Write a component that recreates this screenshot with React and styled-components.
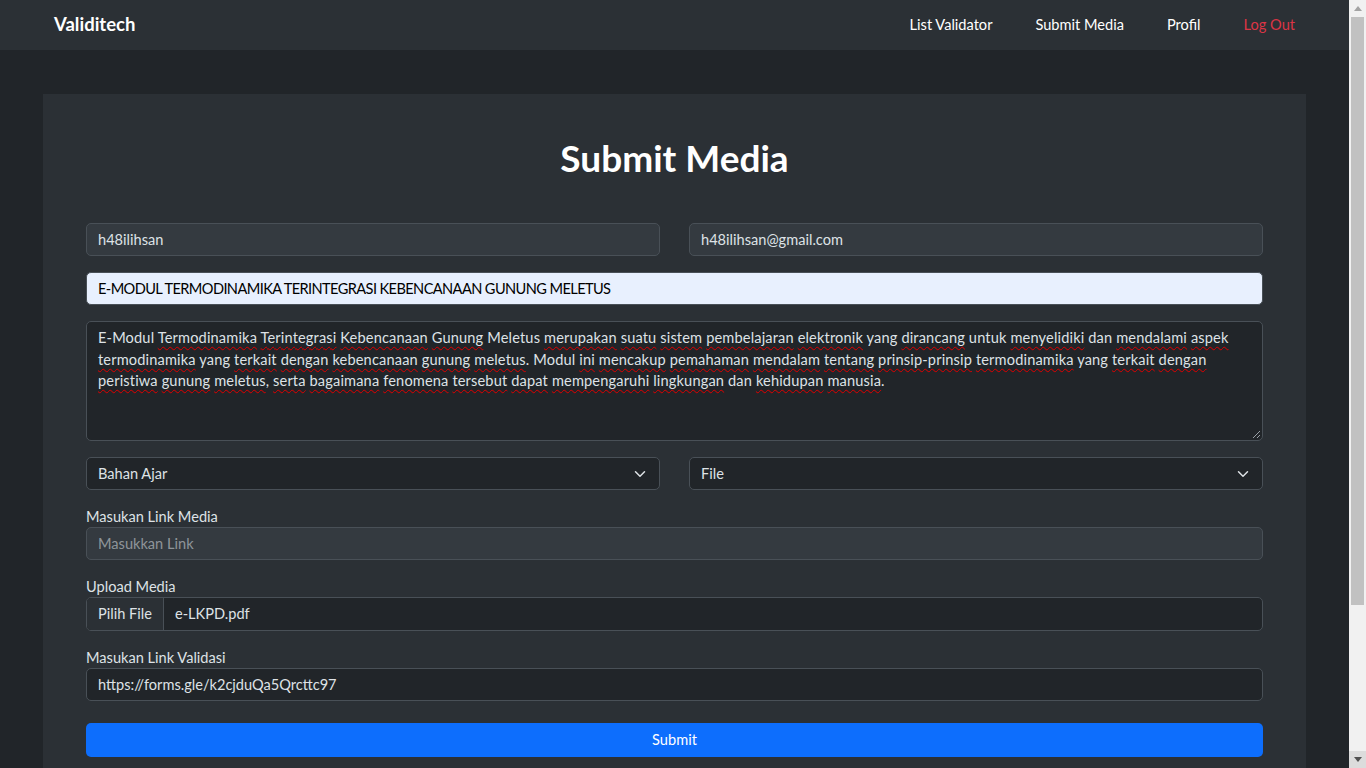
import React from "react";
import styled, { createGlobalStyle } from "styled-components";

const GlobalStyle = createGlobalStyle`
  html, body {
    margin: 0;
    padding: 0;
  }
  body {
    background: #212529;
    color: #dee2e6;
    font-family: Lato, "Open Sans", "Noto Sans", sans-serif;
    font-size: 14.6px;
    line-height: 1.5;
  }
  * {
    box-sizing: border-box;
  }
`;

const Page = styled.div`
  margin-right: 17px;
`;

/* scrollbar bawaan browser di referensi */
const ScrollTrack = styled.div`
  position: fixed;
  top: 0;
  right: 0;
  width: 17px;
  height: 100vh;
  background: #f1f1f1;
  display: flex;
  flex-direction: column;
`;

const ScrollArrow = styled.div`
  height: 17px;
  display: flex;
  align-items: center;
  justify-content: center;
  background: ${props => (props.active ? "#dcdcdc" : "#f1f1f1")};
`;

const ScrollThumb = styled.div`
  margin: 0 2px;
  height: 588px;
  background: #c1c1c1;
`;

const ScrollSpace = styled.div`
  flex: 1;
`;

const Navbar = styled.nav`
  height: 50px;
  background: #2b3035;
  display: flex;
  align-items: center;
  justify-content: space-between;
  padding: 0 54px;
`;

const Brand = styled.a`
  color: #fff;
  font-size: 18.5px;
  font-weight: 700;
  text-decoration: none;
`;

const NavLinks = styled.div`
  display: flex;
  gap: 43px;
`;

const NavLink = styled.a`
  color: ${props => (props.danger ? "#dc3545" : "#fff")};
  font-size: 14.6px;
  text-decoration: none;
`;

const Container = styled.div`
  padding: 44px 43px 0;
`;

const Card = styled.div`
  background: #2b3035;
  padding: 43px 43px 60px;
`;

const Title = styled.h1`
  margin: 0 0 44px;
  text-align: center;
  color: #fff;
  font-size: 37px;
  font-weight: 700;
  line-height: 42px;
`;

const Form = styled.form`
  display: grid;
  gap: 16px;
`;

const Row = styled.div`
  display: grid;
  grid-template-columns: 1fr 1fr;
  gap: 29px;
`;

const Group = styled.div`
  display: flex;
  flex-direction: column;
`;

const Label = styled.label`
  line-height: 21px;
  color: #dee2e6;
`;

const bgFor = variant =>
  variant === "disabled" ? "#343a40" : variant === "autofill" ? "#e8f0fe" : "#212529";

const Input = styled.input`
  height: 33px;
  width: 100%;
  padding: 0 11px;
  border: 1px solid #495057;
  border-radius: 5px;
  background: ${props => bgFor(props.variant)};
  color: ${props => (props.variant === "autofill" ? "#000" : "#dee2e6")};
  font: inherit;
  letter-spacing: ${props => (props.variant === "autofill" ? "-0.6px" : "0")};
  outline: none;

  &::placeholder {
    color: rgba(222, 226, 230, 0.55);
  }
`;

const TextBox = styled.div`
  position: relative;
  height: 120px;
  padding: 5px 11px;
  border: 1px solid #495057;
  border-radius: 5px;
  background: #212529;
  line-height: 21.5px;
  letter-spacing: 0.15px;
  color: #dee2e6;
`;

const Line = styled.div`
  white-space: nowrap;
`;

const Typo = styled.span`
  text-decoration: underline wavy #e00000;
  text-decoration-thickness: 1px;
  text-underline-offset: 3px;
  text-decoration-skip-ink: none;
`;

const Grip = styled.svg`
  position: absolute;
  right: 1px;
  bottom: 1px;
`;

const SelectBox = styled.div`
  height: 33px;
  display: flex;
  align-items: center;
  justify-content: space-between;
  padding: 0 12px 0 11px;
  border: 1px solid #495057;
  border-radius: 5px;
  background: #212529;
  color: #dee2e6;
`;

const FileBox = styled.div`
  height: 34px;
  display: flex;
  border: 1px solid #495057;
  border-radius: 5px;
  background: #212529;
  overflow: hidden;
`;

const FileButton = styled.span`
  display: flex;
  align-items: center;
  padding: 0 11px;
  background: #2b3035;
  border-right: 1px solid #495057;
  color: #dee2e6;
`;

const FileName = styled.span`
  display: flex;
  align-items: center;
  padding: 0 11px;
  color: #dee2e6;
`;

const SubmitButton = styled.button`
  margin-top: 6px;
  height: 34px;
  border: none;
  border-radius: 5px;
  background: #0d6efd;
  color: #fff;
  font: inherit;
  cursor: pointer;
`;

const Chevron = () => (
  <svg width="14" height="12" viewBox="0 0 16 16" fill="none">
    <path
      d="M2 5l6 6 6-6"
      stroke="#dee2e6"
      strokeWidth="2"
      strokeLinecap="round"
      strokeLinejoin="round"
    />
  </svg>
);

const Select = ({ value }) => (
  <SelectBox>
    <span>{value}</span>
    <Chevron />
  </SelectBox>
);

const Triangle = ({ down, color }) => (
  <svg width="8" height="5" viewBox="0 0 8 5">
    <path d={down ? "M0 0h8L4 5z" : "M0 5h8L4 0z"} fill={color} />
  </svg>
);

// kata yang ditandai spellcheck di referensi
const bad = new Set([
  "Termodinamika", "Terintegrasi", "Kebencanaan", "Gunung", "merupakan", "suatu",
  "sistem", "pembelajaran", "elektronik", "dirancang", "menyelidiki", "mendalami",
  "aspek", "termodinamika", "terkait", "dengan", "kebencanaan", "gunung", "meletus",
  "ini", "mencakup", "pemahaman", "mendalam", "tentang", "prinsip-prinsip",
  "peristiwa", "serta", "bagaimana", "fenomena", "tersebut", "dapat", "mempengaruhi",
  "lingkungan", "kehidupan", "manusia"
]);

const lines = [
  "E-Modul Termodinamika Terintegrasi Kebencanaan Gunung Meletus merupakan suatu sistem pembelajaran elektronik yang dirancang untuk menyelidiki dan mendalami aspek",
  "termodinamika yang terkait dengan kebencanaan gunung meletus. Modul ini mencakup pemahaman mendalam tentang prinsip-prinsip termodinamika yang terkait dengan",
  "peristiwa gunung meletus, serta bagaimana fenomena tersebut dapat mempengaruhi lingkungan dan kehidupan manusia."
];

const renderLine = text =>
  text.split(" ").map((word, i) => {
    const clean = word.replace(/[.,]$/, "");
    const tail = word.slice(clean.length);
    return (
      <React.Fragment key={i}>
        {i > 0 && " "}
        {bad.has(clean) ? <Typo>{clean}</Typo> : clean}
        {tail}
      </React.Fragment>
    );
  });

export default function App() {
  return (
    <>
      <GlobalStyle />
      <Page>
        <Navbar>
          <Brand href="#">Validitech</Brand>
          <NavLinks>
            <NavLink href="#">List Validator</NavLink>
            <NavLink href="#">Submit Media</NavLink>
            <NavLink href="#">Profil</NavLink>
            <NavLink href="#" danger>
              Log Out
            </NavLink>
          </NavLinks>
        </Navbar>
        <Container>
          <Card>
            <Title>Submit Media</Title>
            <Form onSubmit={e => e.preventDefault()}>
              <Row>
                <Input variant="disabled" defaultValue="h48ilihsan" readOnly />
                <Input variant="disabled" defaultValue="h48ilihsan@gmail.com" readOnly />
              </Row>
              <Input
                variant="autofill"
                defaultValue="E-MODUL TERMODINAMIKA TERINTEGRASI KEBENCANAAN GUNUNG MELETUS"
              />
              <TextBox>
                {lines.map((l, i) => (
                  <Line key={i}>{renderLine(l)}</Line>
                ))}
                <Grip width="12" height="12" viewBox="0 0 12 12">
                  <path d="M11 4L4 11M11 8L8 11" stroke="#9aa0a6" strokeWidth="1" />
                </Grip>
              </TextBox>
              <Row>
                <Select value="Bahan Ajar" />
                <Select value="File" />
              </Row>
              <Group>
                <Label>Masukan Link Media</Label>
                <Input variant="disabled" placeholder="Masukkan Link" readOnly />
              </Group>
              <Group>
                <Label>Upload Media</Label>
                <FileBox>
                  <FileButton>Pilih File</FileButton>
                  <FileName>e-LKPD.pdf</FileName>
                </FileBox>
              </Group>
              <Group>
                <Label>Masukan Link Validasi</Label>
                <Input defaultValue="https://forms.gle/k2cjduQa5Qrcttc97" />
              </Group>
              <SubmitButton type="submit">Submit</SubmitButton>
            </Form>
          </Card>
        </Container>
      </Page>
      <ScrollTrack>
        <ScrollArrow>
          <Triangle color="#a3a3a3" />
        </ScrollArrow>
        <ScrollThumb />
        <ScrollSpace />
        <ScrollArrow active>
          <Triangle down color="#505050" />
        </ScrollArrow>
      </ScrollTrack>
    </>
  );
}
